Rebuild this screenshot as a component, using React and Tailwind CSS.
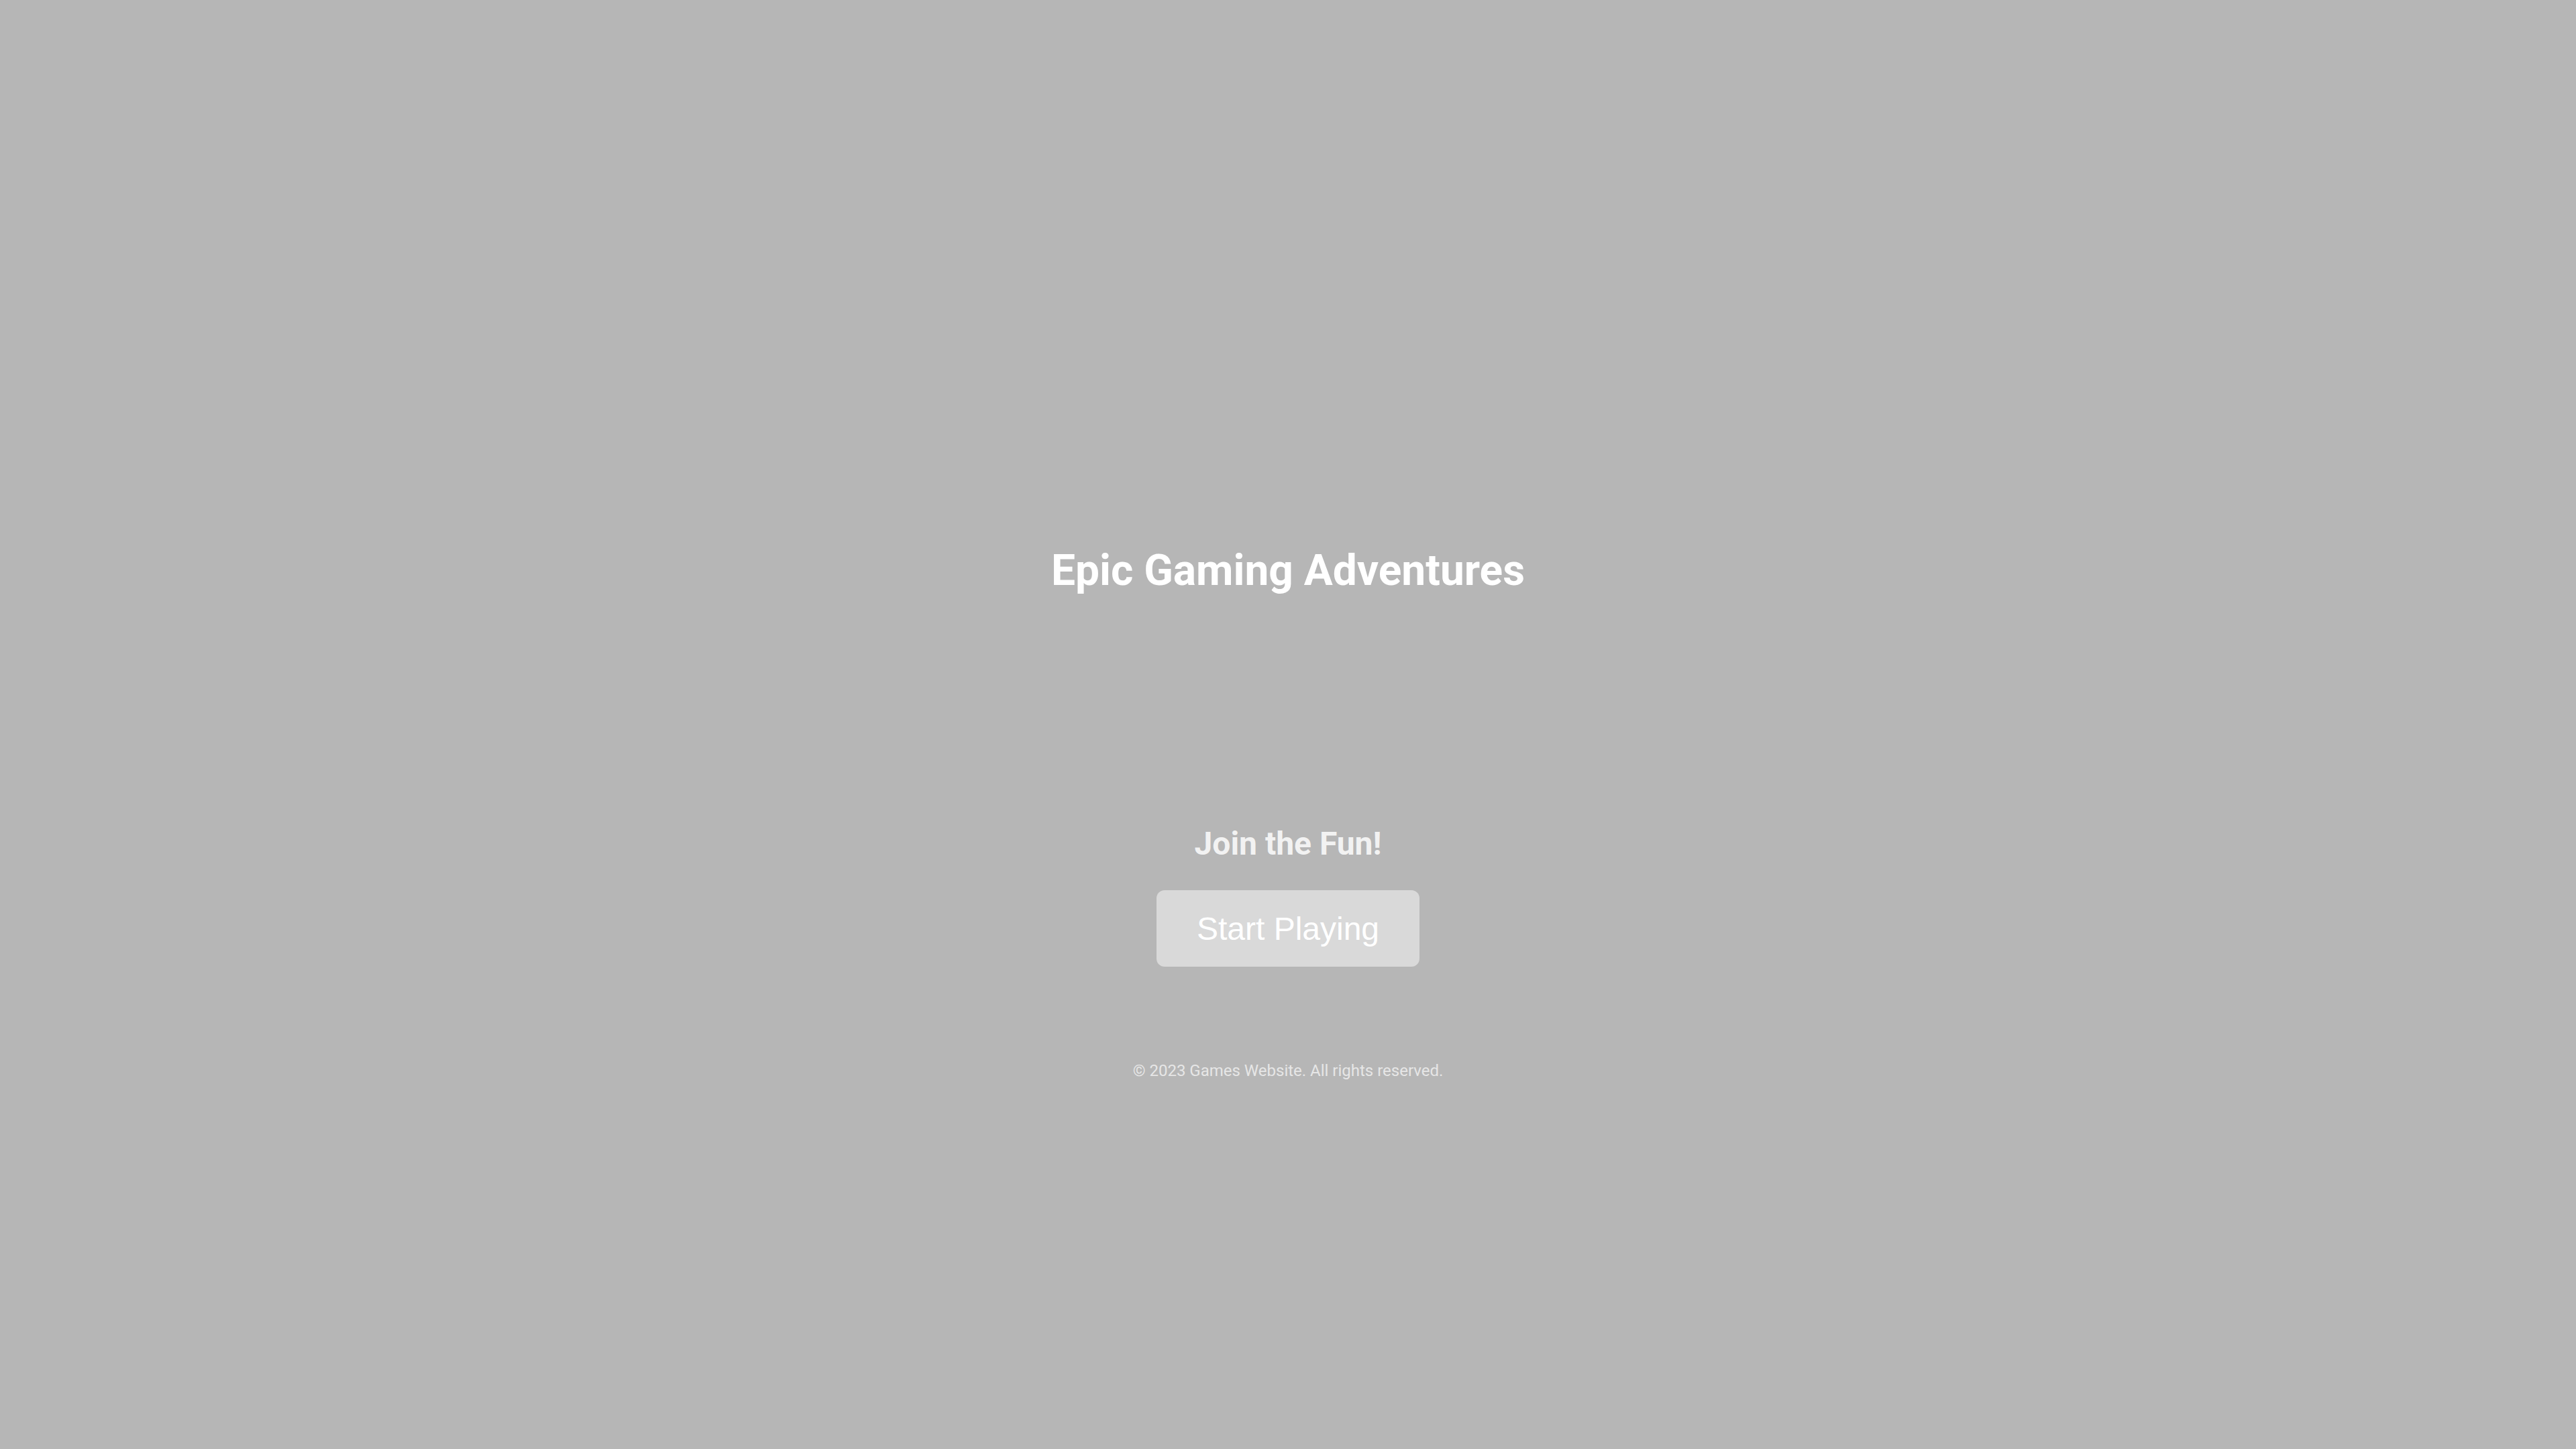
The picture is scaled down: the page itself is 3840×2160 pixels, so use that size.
export default function App() {
  return (
    <div className="min-h-screen w-full bg-[#b6b6b6] flex flex-col items-center">
      <h1 className="mt-[819px] text-[64px] leading-none font-bold text-white font-['Roboto',sans-serif]">
        Epic Gaming Adventures
      </h1>
      <h2 className="mt-[351px] text-[48px] leading-none font-bold text-[#f2f2f2] font-['Roboto',sans-serif]">
        Join the Fun!
      </h2>
      <button className="mt-[45px] w-[392px] h-[114px] rounded-[12px] bg-[#d9d9d9] text-white text-[48px] font-['Liberation_Sans',Arial,sans-serif] flex items-center justify-center pt-[2px]">
        Start Playing
      </button>
      <p className="mt-[143px] text-[24px] leading-none text-[#e6e6e6] font-['Roboto',sans-serif]">
        © 2023 Games Website. All rights reserved.
      </p>
    </div>
  );
}
